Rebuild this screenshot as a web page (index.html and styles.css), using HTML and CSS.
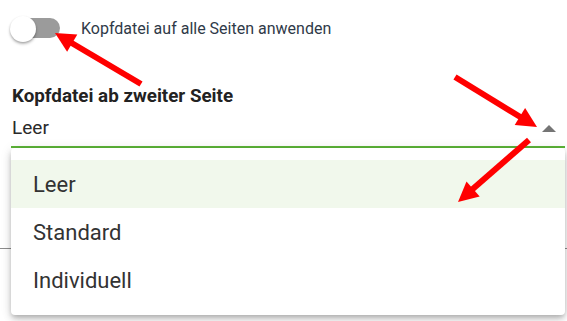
FILE: index.html
```html
<!DOCTYPE html>
<html lang="de">
<head>
<meta charset="utf-8">
<title>Kopfdatei</title>
<link rel="stylesheet" href="styles.css">
</head>
<body>
<div class="page">
  <div class="switch-row">
    <span class="switch"><span class="track"></span><span class="thumb"></span></span>
    <span class="switch-label">Kopfdatei auf alle Seiten anwenden</span>
  </div>
  <div class="field">
    <div class="field-label">Kopfdatei ab zweiter Seite</div>
    <div class="select">
      <span class="select-value">Leer</span>
      <svg class="caret" width="14" height="7" viewBox="0 0 14 7"><path d="M0 7 L7 0 L14 7 Z" fill="#757575"/></svg>
    </div>
  </div>
  <div class="next-line"></div>

  <ul class="menu">
    <li class="menu-item active">Leer</li>
    <li class="menu-item">Standard</li>
    <li class="menu-item">Individuell</li>
  </ul>

  <svg class="annotations" width="567" height="321" viewBox="0 0 567 321">
    <g fill="#ff0000" stroke="none">
      <line x1="141" y1="84" x2="70" y2="42" stroke="#ff0000" stroke-width="6"/>
      <polygon points="55,33 77.3,34.6 67.1,51.8"/>
      <line x1="455" y1="77" x2="522" y2="118" stroke="#ff0000" stroke-width="6"/>
      <polygon points="537,127 514.7,125.1 525.1,108.1"/>
      <line x1="529" y1="140" x2="471" y2="190.5" stroke="#ff0000" stroke-width="6"/>
      <polygon points="458,202 466.5,181.4 479.7,196.4"/>
    </g>
  </svg>
</div>
</body>
</html>
```
FILE: styles.css
```css
html, body {
  margin: 0;
  padding: 0;
  background: #ffffff;
}
body {
  font-family: Roboto, "Liberation Sans", Arial, sans-serif;
  width: 567px;
  height: 321px;
  overflow: hidden;
}
.page {
  position: relative;
  width: 567px;
  height: 321px;
}
.switch-row {
  display: flex;
  align-items: center;
  height: 26px;
  padding: 15px 0 0 10px;
}
.switch {
  position: relative;
  width: 50px;
  height: 26px;
  flex: none;
}
.track {
  position: absolute;
  left: 4px;
  top: 3px;
  width: 46px;
  height: 20px;
  border-radius: 10px;
  background: #9b9b9b;
}
.thumb {
  position: absolute;
  left: 0;
  top: 1px;
  width: 26px;
  height: 26px;
  border-radius: 50%;
  background: #ffffff;
  box-shadow: 0 2px 3px rgba(0,0,0,0.25), 0 1px 2px rgba(0,0,0,0.15);
}
.switch-label {
  margin-left: 21px;
  font-size: 16px;
  color: #2f3a48;
}
.field {
  padding: 0 2px 0 11px;
  margin-top: 44px;
}
.field-label {
  font-size: 18.8px;
  font-weight: 700;
  color: #222222;
  line-height: 22px;
  padding-left: 1px;
}
.select {
  display: flex;
  align-items: center;
  justify-content: space-between;
  height: 38px;
  padding-top: 1px;
  border-bottom: 2px solid #5cb338;
}
.select-value {
  font-size: 19px;
  color: #2a2a2a;
  padding-left: 1px;
}
.caret {
  margin-right: 9px;
  margin-top: 2px;
}
.next-line {
  margin-top: 100px;
  height: 1px;
  background: #8c8c8c;
}
.menu {
  position: absolute;
  left: 11px;
  top: 148px;
  width: 554px;
  margin: 0;
  padding: 12px 0 11px;
  list-style: none;
  background: #ffffff;
  border-radius: 4px;
  box-shadow: 0 3px 5px -1px rgba(0,0,0,0.2), 0 5px 8px 0 rgba(0,0,0,0.12), 0 1px 12px 0 rgba(0,0,0,0.1);
}
.menu-item {
  height: 48px;
  line-height: 49px;
  padding-left: 22px;
  font-size: 22px;
  color: #333333;
}
.menu-item.active {
  background: #f1f8ec;
}
.annotations {
  position: absolute;
  left: 0;
  top: 0;
  pointer-events: none;
}
```
